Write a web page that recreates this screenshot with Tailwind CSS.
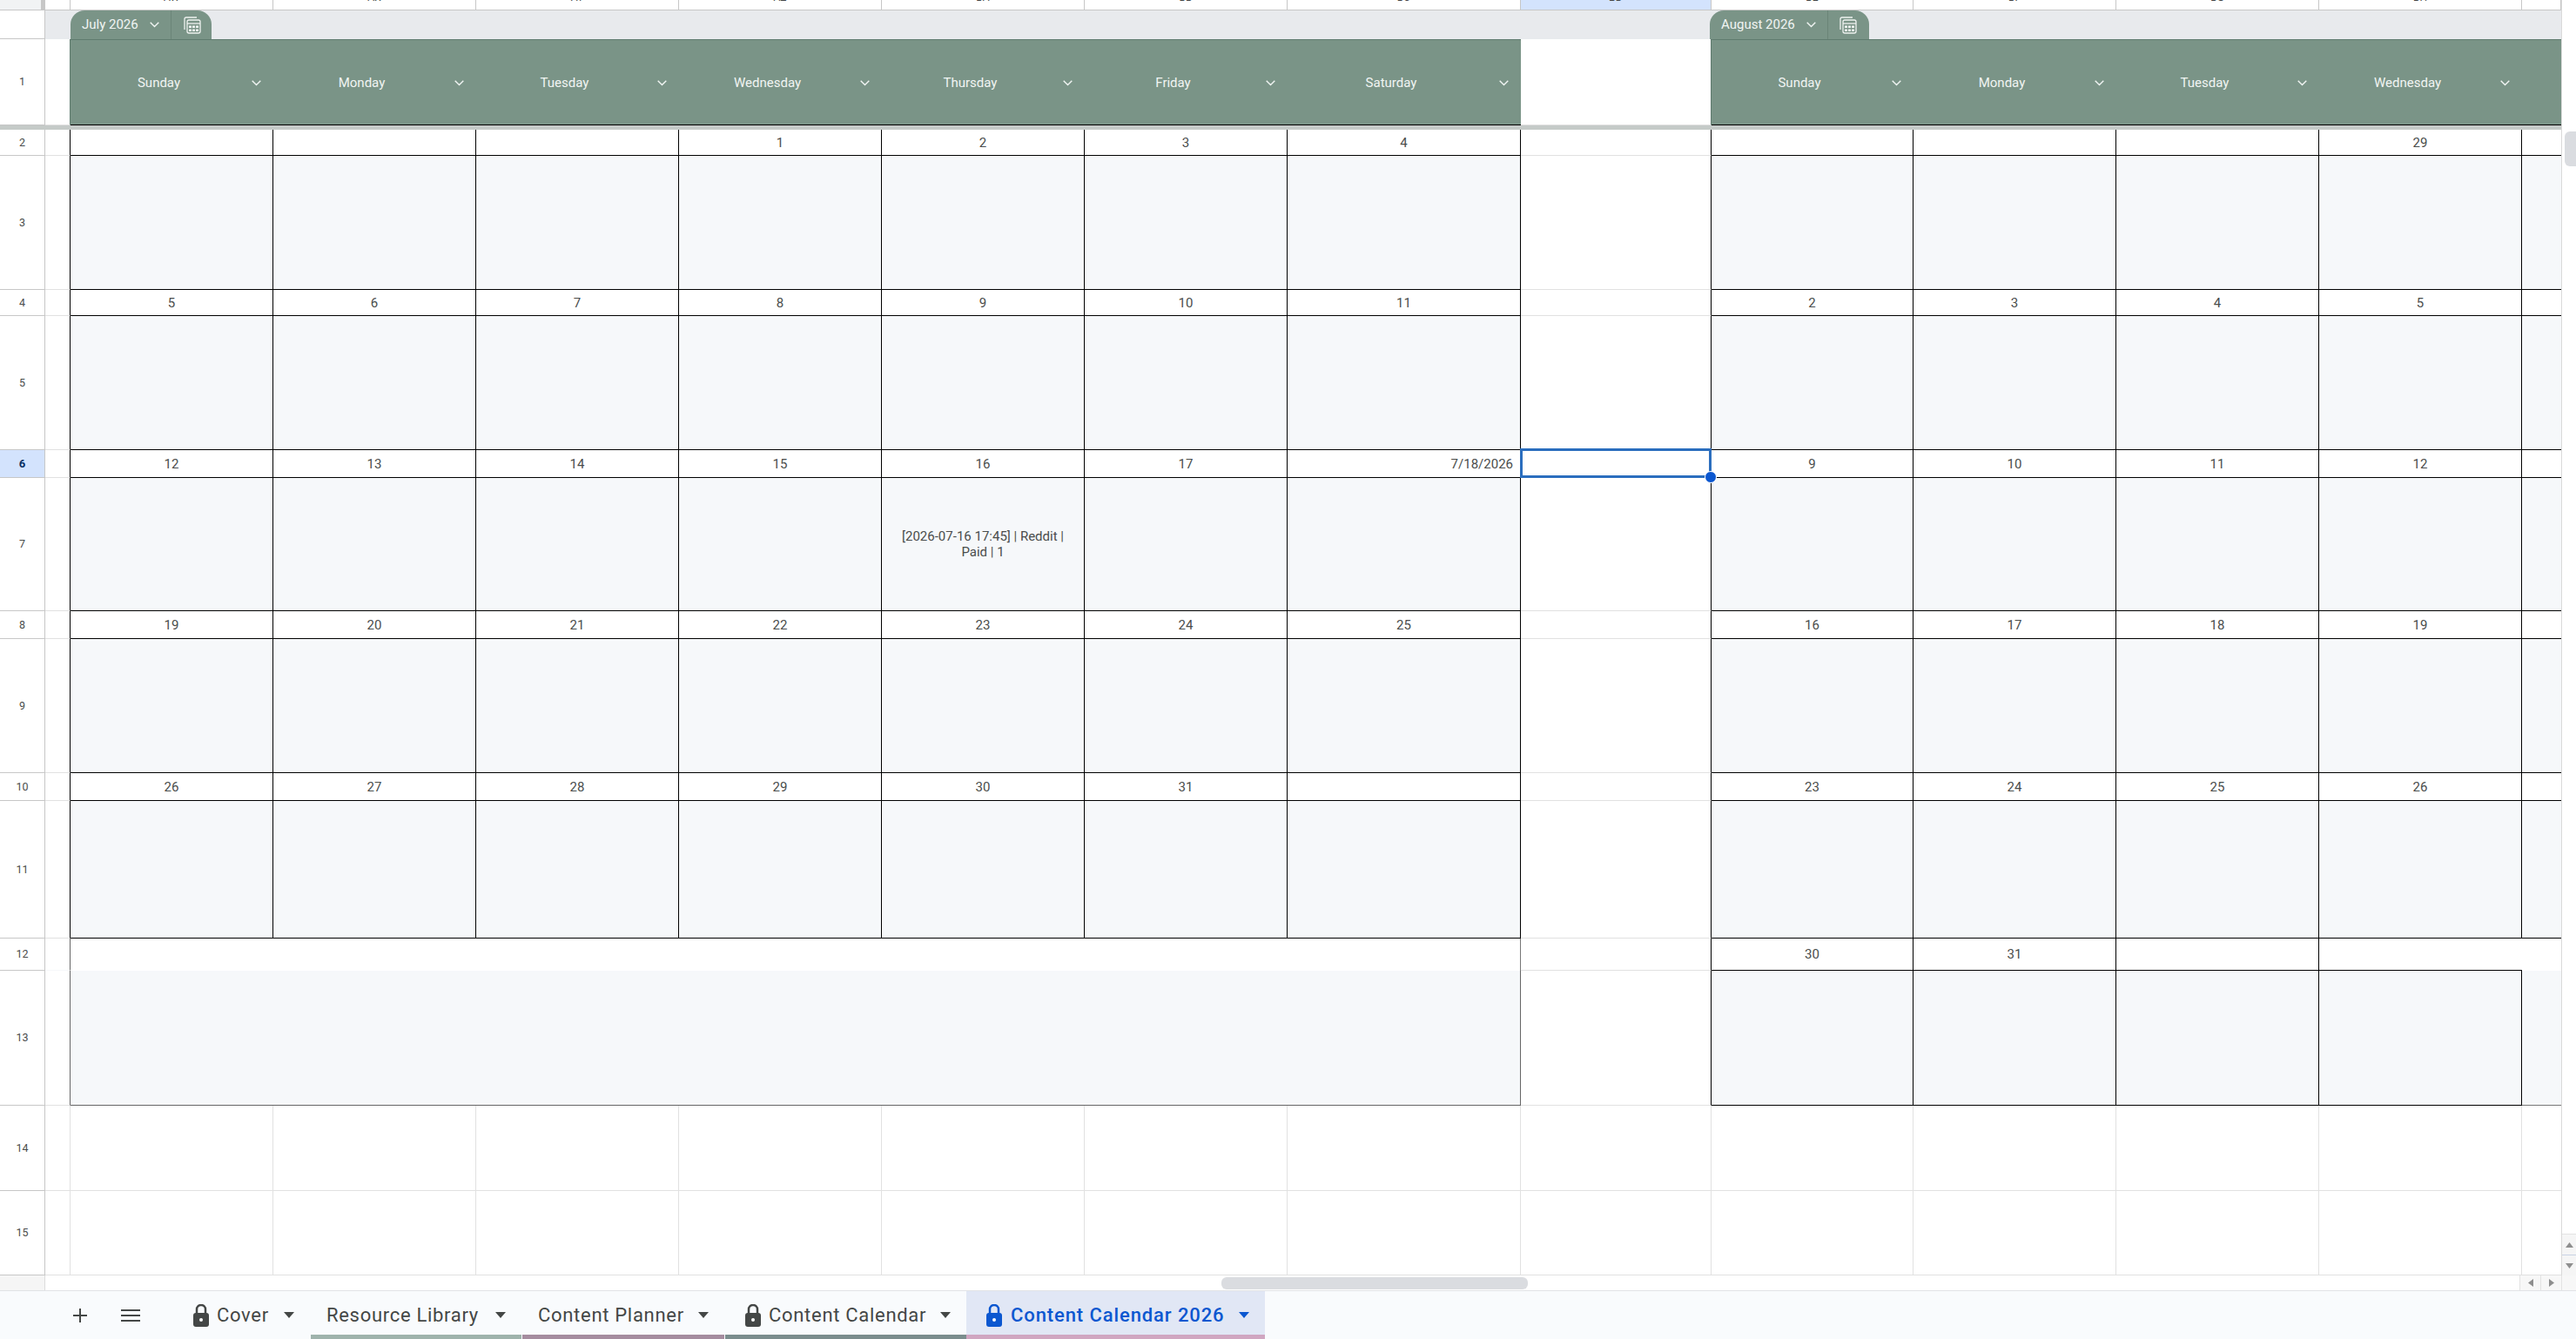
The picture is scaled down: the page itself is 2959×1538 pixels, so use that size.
<!DOCTYPE html>
<html lang="en">

<head>
    <meta charset="UTF-8">
    <title>Content Calendar 2026</title>
    <script src="https://cdn.jsdelivr.net/npm/@tailwindcss/browser@4"></script>
</head>

<body class="bg-white">
    <div class="relative w-[2959px] h-[1538px] overflow-hidden flex flex-col bg-white text-[#444746] font-[Roboto,sans-serif]">

        <!-- Sheet area + vertical scrollbar -->
        <div class="flex h-[1465px]">
            <div id="sheet" class="w-[2942px] h-[1465px] grid grid-cols-[52px_29px_233px_233px_233px_233px_233px_233px_268px_219px_232px_233px_233px_233px_45px] grid-rows-[12px_33px_99px_5px_30px_154px_30px_154px_32px_153px_32px_154px_32px_158px_37px_155px_98px_97px]"></div>
            <div class="relative w-[17px] h-[1465px] border-l border-[#d9d9d9] bg-white flex flex-col justify-end">
                <div class="absolute left-[3px] top-[151px] w-[14px] h-[40px] rounded-l-md bg-[#dadce0]"></div>
                <div class="h-[24px] bg-[#f5f5f5] border-t border-[#e3e3e3] flex items-center justify-center">
                    <svg width="9" height="6" viewBox="0 0 9 6"><path d="M4.500 0 9 6H0z" fill="#8e8e8e" /></svg>
                </div>
                <div class="h-[24px] bg-[#f5f5f5] border-t border-[#c9d2e4] flex items-center justify-center">
                    <svg width="9" height="6" viewBox="0 0 9 6"><path d="M4.500 6 9 0H0z" fill="#8e8e8e" /></svg>
                </div>
            </div>
        </div>

        <!-- Horizontal scrollbar -->
        <div class="relative h-[18px] flex border-b border-[#e1e3e6]">
            <div class="w-[52px] bg-[#f5f5f5] border-r border-[#dcdcdc]"></div>
            <div class="flex-1 bg-white"></div>
            <div class="absolute left-[1403px] top-[2px] w-[352px] h-[14px] rounded-md bg-[#dadce0]"></div>
            <div class="w-[24px] bg-[#f7f7f7] border-l border-[#e3e3e3] flex items-center justify-center">
                <svg width="6" height="9" viewBox="0 0 6 9"><path d="M0 4.500 6 0v9z" fill="#8e8e8e" /></svg>
            </div>
            <div class="w-[24px] bg-[#f7f7f7] border-l border-[#e3e3e3] flex items-center justify-center">
                <svg width="6" height="9" viewBox="0 0 6 9"><path d="M6 4.500 0 0v9z" fill="#8e8e8e" /></svg>
            </div>
            <div class="w-[17px] bg-[#f7f7f7] border-l border-[#e3e3e3]"></div>
        </div>

        <!-- Sheet tabs -->
        <div class="flex-1 flex bg-[#f9fbfd] text-[22px] tracking-[0.7px]">
            <div class="w-[199px] flex items-center">
                <svg class="ml-[83px]" width="18" height="18" viewBox="0 0 18 18"><path d="M9 1v16M1 9h16" stroke="#444746" stroke-width="2" /></svg>
                <svg class="ml-[38px]" width="22" height="16" viewBox="0 0 22 16"><path d="M0 2h22M0 8h22M0 14h22" stroke="#444746" stroke-width="2" /></svg>
            </div>

            <div class="w-[158px] h-full flex items-center pl-[23px]">
                <svg class="mr-[9px]" width="18" height="26" viewBox="0 0 18 26"><path d="M4 11V6a5 5 0 0 1 10 0v5" fill="none" stroke="#444746" stroke-width="2.500" /><rect y="10" width="18" height="16" rx="3" fill="#444746" /><circle cx="9" cy="18" r="2" fill="#fff" /></svg>
                <span>Cover</span>
                <svg class="ml-auto mr-[19px]" width="12" height="7" viewBox="0 0 12 7"><path d="M0 0h12L6 7z" fill="#444746" /></svg>
            </div>

            <div class="w-[242px] h-full flex items-center pl-[18px] pt-[5px] border-b-[5px] border-[#9fb3ac] mr-[1px]">
                <span>Resource Library</span>
                <svg class="ml-auto mr-[18px]" width="12" height="7" viewBox="0 0 12 7"><path d="M0 0h12L6 7z" fill="#444746" /></svg>
            </div>

            <div class="w-[232px] h-full flex items-center pl-[18px] pt-[5px] border-b-[5px] border-[#a58c9f] mr-[1px]">
                <span>Content Planner</span>
                <svg class="ml-auto mr-[18px]" width="12" height="7" viewBox="0 0 12 7"><path d="M0 0h12L6 7z" fill="#444746" /></svg>
            </div>

            <div class="w-[277px] h-full flex items-center pl-[23px] pt-[5px] border-b-[5px] border-[#7b8d8d]">
                <svg class="mr-[9px]" width="18" height="26" viewBox="0 0 18 26"><path d="M4 11V6a5 5 0 0 1 10 0v5" fill="none" stroke="#444746" stroke-width="2.500" /><rect y="10" width="18" height="16" rx="3" fill="#444746" /><circle cx="9" cy="18" r="2" fill="#fff" /></svg>
                <span>Content Calendar</span>
                <svg class="ml-auto mr-[18px]" width="12" height="7" viewBox="0 0 12 7"><path d="M0 0h12L6 7z" fill="#444746" /></svg>
            </div>

            <div class="w-[343px] h-full flex items-center pl-[23px] pt-[5px] bg-[#e1e7f5] border-b-[5px] border-[#d0a6c1] text-[#0b57d0] font-medium tracking-[0.9px]">
                <svg class="mr-[10px]" width="18" height="26" viewBox="0 0 18 26"><path d="M4 11V6a5 5 0 0 1 10 0v5" fill="none" stroke="#0b57d0" stroke-width="2.500" /><rect y="10" width="18" height="16" rx="3" fill="#0b57d0" /><circle cx="9" cy="18" r="2" fill="#fff" /></svg>
                <span>Content Calendar 2026</span>
                <svg class="ml-auto mr-[18px]" width="12" height="7" viewBox="0 0 12 7"><path d="M0 0h12L6 7z" fill="#0b57d0" /></svg>
            </div>
        </div>
    </div>

    <script>
        const sheet = document.getElementById('sheet');

        const CHEVRON = '<svg class="ml-[5px] mr-[14px] shrink-0" width="11" height="7" viewBox="0 0 11 7"><path d="M.7.7 5.500 5.500 10.300.7" fill="none" stroke="#f1f5f3" stroke-width="1.400" /></svg>';
        const TABLE_ICON = '<svg width="20" height="20" viewBox="0 0 20 20"><path d="M1 15V3a2 2 0 0 1 2-2h12" fill="none" stroke="#eef2f0" stroke-width="1.300" /><rect x="4" y="4" width="15" height="15" rx="2" fill="none" stroke="#eef2f0" stroke-width="1.300" /><path d="M4 8h15" stroke="#eef2f0" stroke-width="1.300" /><path d="M6 10.500h3v2.500H6zM10 10.500h3v2.500h-3zM14 10.500h3v2.500h-3zM6 14.500h3V17H6zM10 14.500h3V17h-3zM14 14.500h3V17h-3z" fill="#eef2f0" /></svg>';

        const LETTER = 'overflow-hidden flex justify-center items-start text-[12px] leading-[11px] border-r border-b border-[#c7c7c7] text-[#444746]';
        const LABEL = 'flex items-center justify-center pt-[1px] text-[12.500px] text-[#4a4d4c] border-r border-b border-[#c7c7c7]';
        const LABEL_ON = 'flex items-center justify-center pt-[1px] text-[13px] font-bold text-[#0b2f63] bg-[#d3e3fd] border-r border-b border-[#c7c7c7]';
        const GUTTER = 'bg-white border-b border-[#e1e1e1] border-r border-r-black';
        const DATE = 'flex items-center justify-center pt-[1px] text-[15px] text-[#4a4d4c] bg-white border-r border-b border-black';
        const DATE_RIGHT = 'flex items-center justify-end pt-[1px] pr-[8px] text-[15px] text-[#4a4d4c] bg-white border-r border-b border-black';
        const BODY = 'flex items-center justify-center text-center text-[15px] leading-[18px] text-[#4a4d4c] bg-[#f6f8fa] border-r border-b border-black';
        const BLANK = 'bg-white border-r border-r-black border-b border-b-[#e1e1e1]';
        const EDGE_DATE = 'bg-white border-b border-black';
        const EDGE_BODY = 'bg-[#f6f8fa] border-b border-black';
        const PLAIN = 'bg-white border-r border-b border-[#e1e1e1]';

        function add(cls, html) {
            const el = document.createElement('div');
            el.className = cls;
            el.innerHTML = html || '';
            sheet.appendChild(el);
            return el;
        }

        // Column letters, only their lower edge shows above the header line
        add('bg-[#f1f3f4] border-b border-[#c7c7c7] border-r-[5px] border-r-[#c7c7c7]');
        add('bg-white border-b border-r border-[#c7c7c7]');
        ['AW', 'AX', 'AY', 'AZ', 'BA', 'BB', 'BC'].forEach(l => add(LETTER, `<span class="-mt-[8px]">${l}</span>`));
        add(LETTER + ' bg-[#d3e3fd] font-bold', '<span class="-mt-[8px]">BD</span>');
        ['BE', 'BF', 'BG', 'BH'].forEach(l => add(LETTER, `<span class="-mt-[8px]">${l}</span>`));
        add(LETTER);

        // Table tabs band
        add('bg-white border-r border-b border-[#c7c7c7]');
        add('col-span-14 flex items-end pl-[29px] bg-[#e8eaed]', `
            <div class="w-[162px] h-[33px] flex items-center rounded-t-[16px] bg-[#7a9487] text-[15px] text-[#f1f5f3]">
                <span class="ml-[13px]">July 2026</span>
                <svg class="ml-[13px]" width="11" height="7" viewBox="0 0 11 7"><path d="M.7.7 5.500 5.500 10.300.7" fill="none" stroke="#f1f5f3" stroke-width="1.400" /></svg>
                <div class="ml-[13px] h-full border-l border-[#6b8578] pl-[14px] flex items-center">${TABLE_ICON}</div>
            </div>
            <div class="ml-[1721px] w-[183px] h-[33px] flex items-center rounded-t-[16px] bg-[#7a9487] text-[15px] text-[#f1f5f3]">
                <span class="ml-[13px]">August 2026</span>
                <svg class="ml-[13px]" width="11" height="7" viewBox="0 0 11 7"><path d="M.7.7 5.500 5.500 10.300.7" fill="none" stroke="#f1f5f3" stroke-width="1.400" /></svg>
                <div class="ml-[13px] h-full border-l border-[#6b8578] pl-[13px] flex items-center">${TABLE_ICON}</div>
            </div>`);

        // Weekday header, row 1
        const HEAD = 'flex items-center pt-[1px] text-[15px] text-[#f1f5f3] bg-[#7a9487] border-t border-t-[#5f7b6e] border-b border-b-black';
        add(LABEL, '1');
        add('bg-white border-b border-[#e1e1e1] border-r border-r-[#5f7b6e]');
        const head = d => add(HEAD, `<span class="flex-1 text-center">${d}</span>${CHEVRON}`);
        ['Sunday', 'Monday', 'Tuesday', 'Wednesday', 'Thursday', 'Friday', 'Saturday'].forEach(head);
        add('bg-white border-b border-b-[#e1e1e1] border-r border-r-[#5f7b6e]');
        ['Sunday', 'Monday', 'Tuesday', 'Wednesday'].forEach(head);
        add(HEAD);

        // Freeze bar
        add('col-span-full bg-[#c5cac8]');

        function dateRow(n, july, aug, active) {
            add(active ? LABEL_ON : LABEL, n);
            add(GUTTER);
            july.forEach(v => add(String(v).includes('/') ? DATE_RIGHT : DATE, v));
            const bd = add(BLANK + ' relative');
            if (active) {
                bd.innerHTML = '<div class="absolute -left-px -top-[2px] w-[220px] h-[34px] border-[3px] border-[#2b6ebe]"></div><div class="absolute left-[211px] top-[24px] w-[14px] h-[14px] rounded-full bg-[#0b57d0] border border-white"></div>';
            }
            aug.forEach(v => add(DATE, v));
            add(EDGE_DATE);
        }

        function bodyRow(n, notes) {
            add(LABEL, n);
            add(GUTTER);
            for (let i = 0; i < 7; i++) add(BODY, (notes && notes[i]) || '');
            add(BLANK);
            for (let i = 0; i < 4; i++) add(BODY);
            add(EDGE_BODY);
        }

        dateRow(2, ['', '', '', 1, 2, 3, 4], ['', '', '', 29]);
        bodyRow(3);
        dateRow(4, [5, 6, 7, 8, 9, 10, 11], [2, 3, 4, 5]);
        bodyRow(5);
        dateRow(6, [12, 13, 14, 15, 16, 17, '7/18/2026'], [9, 10, 11, 12], true);
        bodyRow(7, { 4: '[2026-07-16 17:45] | Reddit |<br>Paid | 1' });
        dateRow(8, [19, 20, 21, 22, 23, 24, 25], [16, 17, 18, 19]);
        bodyRow(9);
        dateRow(10, [26, 27, 28, 29, 30, 31, ''], [23, 24, 25, 26]);
        bodyRow(11);

        // Rows 12-13: July ends here, the August grid goes one week on
        add(LABEL, 12);
        add('bg-white border-r border-r-[#666] border-b border-b-[#f6f8fa]');
        add('col-span-7 bg-white border-r border-[#777]');
        add(BLANK);
        add(DATE, 30);
        add(DATE, 31);
        add(DATE);
        add('bg-white border-b border-black');
        add('bg-white');

        add(LABEL, 13);
        add('bg-white border-r border-b border-[#666] border-b-[#e1e1e1]');
        add('col-span-7 bg-[#f6f8fa] border-r border-b border-[#666]');
        add(BLANK);
        for (let i = 0; i < 4; i++) add(BODY);
        add('bg-[#f6f8fa] border-b border-[#777]');

        // Empty rows below the calendar
        [14, 15].forEach(n => {
            add(LABEL, n);
            add(PLAIN);
            for (let i = 0; i < 13; i++) add(i === 12 ? 'bg-white border-b border-[#e1e1e1]' : PLAIN);
        });
    </script>
</body>

</html>
